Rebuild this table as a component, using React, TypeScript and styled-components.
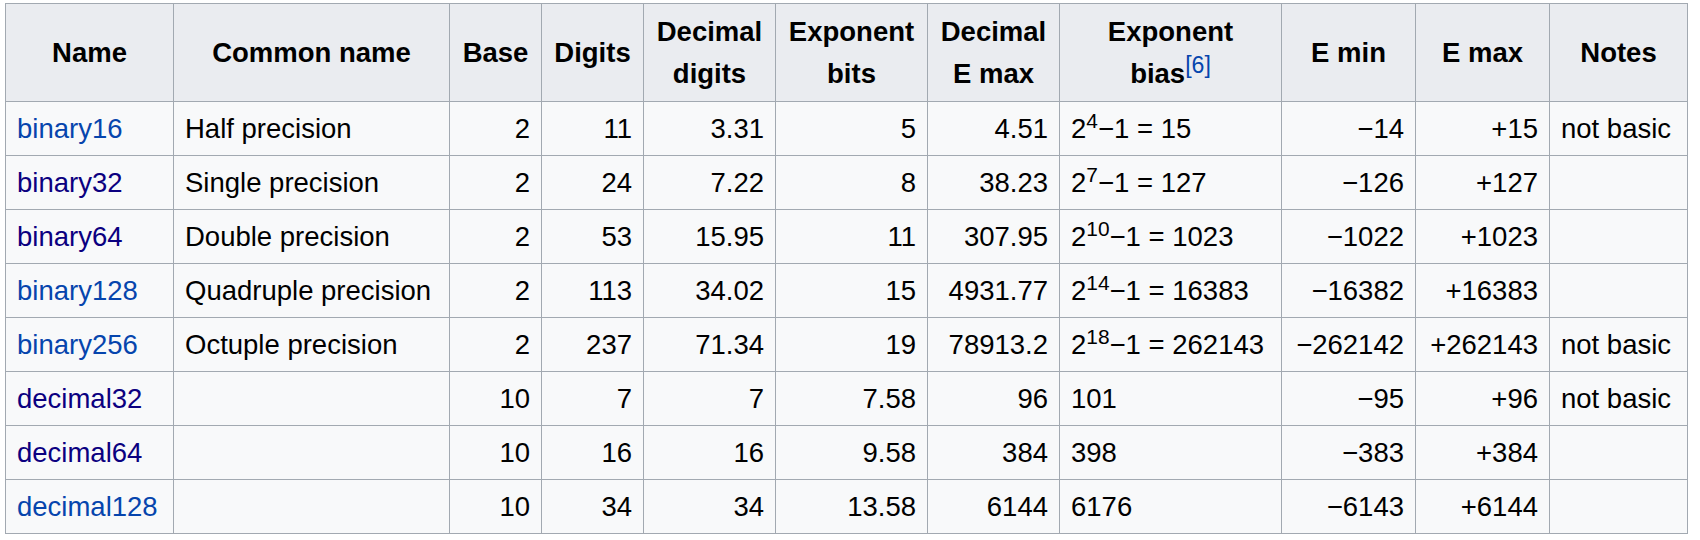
import React from "react";
import styled, { createGlobalStyle } from "styled-components";

const GlobalStyle = createGlobalStyle`
  html, body {
    margin: 0;
    padding: 0;
    background: #ffffff;
  }
  body {
    font-family: "Liberation Sans", Arial, Helvetica, sans-serif;
    color: #202122;
  }
`;

const Page = styled.div`
  padding: 3px 0 0 5px;
`;

const Table = styled.table`
  border-collapse: collapse;
  table-layout: fixed;
  width: 1683px;
  background: #f8f9fa;
  border: 1px solid #a2a9b1;
  font-size: 27.5px;
  line-height: 42px;
  color: #000;
`;

const HeadCell = styled.th`
  background: #eaecf0;
  border: 1px solid #a2a9b1;
  padding: 6.5px 11px 6.5px;
  font-weight: bold;
  text-align: center;
  vertical-align: middle;
`;

const Cell = styled.td<{ $align?: "left" | "right" }>`
  border: 1px solid #a2a9b1;
  padding: 5.5px 11px;
  text-align: ${(p) => p.$align ?? "left"};
  vertical-align: middle;
  white-space: nowrap;
`;

const NameLink = styled.a<{ $visited?: boolean }>`
  color: ${(p) => (p.$visited ? "#0b0080" : "#0645ad")};
  text-decoration: none;
`;

const Sup = styled.sup`
  font-size: 76%;
  line-height: 0;
  vertical-align: super;
`;

const RefSup = styled(Sup)`
  font-size: 84%;
  font-weight: normal;
  color: #0645ad;
`;

type Row = {
  name: string;
  visited: boolean;
  common: string;
  base: string;
  digits: string;
  decDigits: string;
  expBits: string;
  decEmax: string;
  bias: React.ReactNode;
  emin: string;
  emax: string;
  notes: string;
};

const pow = (exp: string, value: string) => (
  <>
    2<Sup>{exp}</Sup>−1 = {value}
  </>
);

const rows: Row[] = [
  { name: "binary16", visited: false, common: "Half precision", base: "2", digits: "11", decDigits: "3.31", expBits: "5", decEmax: "4.51", bias: pow("4", "15"), emin: "−14", emax: "+15", notes: "not basic" },
  { name: "binary32", visited: true, common: "Single precision", base: "2", digits: "24", decDigits: "7.22", expBits: "8", decEmax: "38.23", bias: pow("7", "127"), emin: "−126", emax: "+127", notes: "" },
  { name: "binary64", visited: true, common: "Double precision", base: "2", digits: "53", decDigits: "15.95", expBits: "11", decEmax: "307.95", bias: pow("10", "1023"), emin: "−1022", emax: "+1023", notes: "" },
  { name: "binary128", visited: false, common: "Quadruple precision", base: "2", digits: "113", decDigits: "34.02", expBits: "15", decEmax: "4931.77", bias: pow("14", "16383"), emin: "−16382", emax: "+16383", notes: "" },
  { name: "binary256", visited: false, common: "Octuple precision", base: "2", digits: "237", decDigits: "71.34", expBits: "19", decEmax: "78913.2", bias: pow("18", "262143"), emin: "−262142", emax: "+262143", notes: "not basic" },
  { name: "decimal32", visited: true, common: "", base: "10", digits: "7", decDigits: "7", expBits: "7.58", decEmax: "96", bias: "101", emin: "−95", emax: "+96", notes: "not basic" },
  { name: "decimal64", visited: true, common: "", base: "10", digits: "16", decDigits: "16", expBits: "9.58", decEmax: "384", bias: "398", emin: "−383", emax: "+384", notes: "" },
  { name: "decimal128", visited: false, common: "", base: "10", digits: "34", decDigits: "34", expBits: "13.58", decEmax: "6144", bias: "6176", emin: "−6143", emax: "+6144", notes: "" },
];

const colWidths = [168, 276, 92, 102, 132, 152, 132, 222, 134, 134, 138];

export default function App() {
  return (
    <>
      <GlobalStyle />
      <Page>
        <Table>
          <colgroup>
            {colWidths.map((w, i) => (
              <col key={i} style={{ width: w }} />
            ))}
          </colgroup>
          <thead>
            <tr>
              <HeadCell>Name</HeadCell>
              <HeadCell>Common name</HeadCell>
              <HeadCell>Base</HeadCell>
              <HeadCell>Digits</HeadCell>
              <HeadCell>Decimal digits</HeadCell>
              <HeadCell>Exponent bits</HeadCell>
              <HeadCell>Decimal E max</HeadCell>
              <HeadCell>
                Exponent bias<RefSup>[6]</RefSup>
              </HeadCell>
              <HeadCell>E min</HeadCell>
              <HeadCell>E max</HeadCell>
              <HeadCell>Notes</HeadCell>
            </tr>
          </thead>
          <tbody>
            {rows.map((r) => (
              <tr key={r.name}>
                <Cell>
                  <NameLink href="#" $visited={r.visited}>
                    {r.name}
                  </NameLink>
                </Cell>
                <Cell>{r.common}</Cell>
                <Cell $align="right">{r.base}</Cell>
                <Cell $align="right">{r.digits}</Cell>
                <Cell $align="right">{r.decDigits}</Cell>
                <Cell $align="right">{r.expBits}</Cell>
                <Cell $align="right">{r.decEmax}</Cell>
                <Cell>{r.bias}</Cell>
                <Cell $align="right">{r.emin}</Cell>
                <Cell $align="right">{r.emax}</Cell>
                <Cell>{r.notes}</Cell>
              </tr>
            ))}
          </tbody>
        </Table>
      </Page>
    </>
  );
}
